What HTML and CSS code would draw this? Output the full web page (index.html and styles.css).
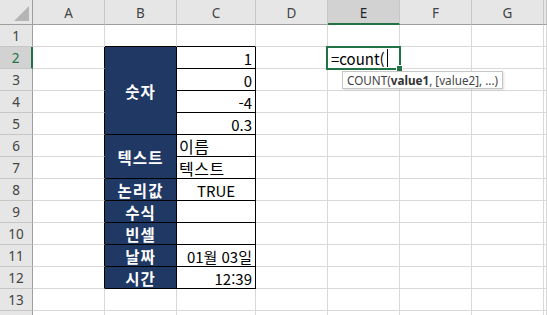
FILE: index.html
```html
<!DOCTYPE html>
<html lang="ko">
<head>
<meta charset="utf-8">
<title>Sheet</title>
<link rel="stylesheet" href="styles.css">
</head>
<body>
<div class="sheet">
  <div class="corner"><span class="tri"></span></div>
  <div class="ch">A</div><div class="ch">B</div><div class="ch">C</div><div class="ch">D</div><div class="ch sel">E</div><div class="ch">F</div><div class="ch">G</div><div class="ch"></div>

  <div class="rh">1</div><div class="c"></div><div class="c bb"></div><div class="c bb"></div><div class="c"></div><div class="c"></div><div class="c"></div><div class="c"></div><div class="c"></div>

  <div class="rh sel">2</div><div class="c br"></div><div class="c lab span4">숫자</div><div class="c val num">1</div><div class="c"></div>
  <div class="c edit"><span class="formula">=count(</span><span class="caret"></span><span class="selbox"><span class="handle"></span></span><div class="tip">COUNT(<b>value1</b>, [value2], ...)</div></div>
  <div class="c"></div><div class="c"></div><div class="c"></div>

  <div class="rh">3</div><div class="c br"></div><div class="c val num">0</div><div class="c"></div><div class="c"></div><div class="c"></div><div class="c"></div><div class="c"></div>
  <div class="rh">4</div><div class="c br"></div><div class="c val num">-4</div><div class="c"></div><div class="c"></div><div class="c"></div><div class="c"></div><div class="c"></div>
  <div class="rh">5</div><div class="c br"></div><div class="c val num">0.3</div><div class="c"></div><div class="c"></div><div class="c"></div><div class="c"></div><div class="c"></div>

  <div class="rh">6</div><div class="c br"></div><div class="c lab span2">텍스트</div><div class="c val txt">이름</div><div class="c"></div><div class="c"></div><div class="c"></div><div class="c"></div><div class="c"></div>
  <div class="rh">7</div><div class="c br"></div><div class="c val txt">텍스트</div><div class="c"></div><div class="c"></div><div class="c"></div><div class="c"></div><div class="c"></div>

  <div class="rh">8</div><div class="c br"></div><div class="c lab">논리값</div><div class="c val mid">TRUE</div><div class="c"></div><div class="c"></div><div class="c"></div><div class="c"></div><div class="c"></div>
  <div class="rh">9</div><div class="c br"></div><div class="c lab">수식</div><div class="c val"></div><div class="c"></div><div class="c"></div><div class="c"></div><div class="c"></div><div class="c"></div>
  <div class="rh">10</div><div class="c br"></div><div class="c lab">빈셀</div><div class="c val"></div><div class="c"></div><div class="c"></div><div class="c"></div><div class="c"></div><div class="c"></div>
  <div class="rh">11</div><div class="c br"></div><div class="c lab">날짜</div><div class="c val num">01월 03일</div><div class="c"></div><div class="c"></div><div class="c"></div><div class="c"></div><div class="c"></div>
  <div class="rh">12</div><div class="c br"></div><div class="c lab">시간</div><div class="c val num">12:39</div><div class="c"></div><div class="c"></div><div class="c"></div><div class="c"></div><div class="c"></div>

  <div class="rh">13</div><div class="c"></div><div class="c"></div><div class="c"></div><div class="c"></div><div class="c"></div><div class="c"></div><div class="c"></div><div class="c"></div>
  <div class="rh"></div><div class="c"></div><div class="c"></div><div class="c"></div><div class="c"></div><div class="c"></div><div class="c"></div><div class="c"></div><div class="c"></div>
</div>
</body>
</html>
```

FILE: styles.css
```css
html, body {
  margin: 0;
  padding: 0;
  background: #ffffff;
  overflow: hidden;
}

.sheet {
  width: 547px;
  height: 315px;
  overflow: hidden;
  display: grid;
  grid-template-columns: 33px 72px 72px 79px 72px 72px 72px 72px 1fr;
  grid-template-rows: 25px repeat(14, 22px);
  font-family: "Noto Sans CJK KR", "Noto Sans", sans-serif;
  font-size: 15px;
  color: #000;
}

.sheet > div {
  box-sizing: border-box;
  min-width: 0;
}

.corner {
  background: #e6e6e6;
  border-right: 1px solid #9f9f9f;
  border-bottom: 1px solid #9f9f9f;
  display: flex;
  align-items: flex-end;
  justify-content: flex-end;
  padding: 0 3px 3px 0;
}

.tri {
  width: 0;
  height: 0;
  border-left: 15px solid transparent;
  border-bottom: 15px solid #b5b5b5;
}

.ch {
  background: #e6e6e6;
  border-right: 1px solid #c6c6c6;
  border-bottom: 1px solid #9f9f9f;
  display: flex;
  align-items: center;
  justify-content: center;
  font-family: "Noto Sans", "Noto Sans CJK KR", sans-serif;
  font-size: 13.5px;
  color: #444;
  padding-top: 2px;
}

.ch.sel {
  background: #d2d2d2;
  border-bottom: 2px solid #217346;
  color: #262626;
}

.rh {
  background: #e6e6e6;
  border-right: 1px solid #9f9f9f;
  border-bottom: 1px solid #c6c6c6;
  display: flex;
  align-items: center;
  justify-content: center;
  font-family: "Noto Sans", "Noto Sans CJK KR", sans-serif;
  font-size: 13.5px;
  color: #444;
}

.rh.sel {
  background: #d2d2d2;
  border-right: 2px solid #217346;
  color: #217346;
}

.c {
  border-right: 1px solid #d9d9d9;
  border-bottom: 1px solid #d9d9d9;
  display: flex;
  align-items: center;
  white-space: nowrap;
}

.c.bb {
  border-bottom-color: #000;
}

.c.br {
  border-right-color: #000;
}

.lab {
  background: #1f3864;
  color: #fff;
  font-weight: 700;
  font-size: 15.5px;
  justify-content: center;
  border-right-color: #000 !important;
  border-bottom-color: #000 !important;
  letter-spacing: 1px;
}

.span4 {
  grid-row: span 4;
}

.span2 {
  grid-row: span 2;
}

.val {
  border-right-color: #000;
  border-bottom-color: #000;
  padding: 1px 3px 0 3px;
}

.num {
  justify-content: flex-end;
}

.txt {
  justify-content: flex-start;
  padding-left: 2px;
  font-size: 16px;
  letter-spacing: 0.5px;
}

.mid {
  justify-content: center;
}

.edit {
  position: relative;
  z-index: 2;
  padding: 1px 0 0 3px;
  overflow: visible;
}

.caret {
  display: inline-block;
  width: 0;
  height: 18px;
  border-left: 1px solid #000;
  margin-left: 2px;
}

.selbox {
  position: absolute;
  left: -2px;
  top: -1px;
  width: 75px;
  height: 24px;
  box-sizing: border-box;
  border: 2px solid #217346;
}

.handle {
  position: absolute;
  right: -4px;
  bottom: -4px;
  width: 5px;
  height: 5px;
  background: #217346;
  border: 1px solid #fff;
}

.tip {
  position: absolute;
  left: 14px;
  top: 24px;
  height: 18px;
  box-sizing: border-box;
  padding: 0 4px;
  background: #fff;
  border: 1px solid #c6c6c6;
  box-shadow: 1px 1px 2px rgba(0, 0, 0, 0.12);
  font-family: "Noto Sans", sans-serif;
  font-size: 11.7px;
  line-height: 16px;
  color: #444;
  white-space: nowrap;
}

.tip b {
  font-weight: 700;
  color: #333;
}
```
